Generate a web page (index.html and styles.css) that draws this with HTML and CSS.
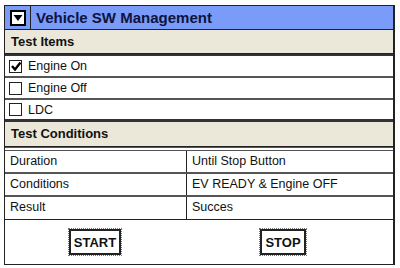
FILE: index.html
```
<!DOCTYPE html>
<html lang="en">
<head>
    <meta charset="UTF-8">
    <title>Vehicle SW Management</title>
    <link rel="stylesheet" href="styles.css">
</head>
<body>
    <div class="panel">
        <div class="title-bar">
            <div class="title-icon">
                <svg width="16" height="16" viewBox="0 0 16 16">
                    <rect x="1" y="1" width="14" height="14" fill="#fff" stroke="#000" stroke-width="2"/>
                    <polygon points="3.5,5 12.5,5 8,11" fill="#000"/>
                </svg>
            </div>
            <h1>Vehicle SW Management</h1>
        </div>

        <div class="section-head">Test Items</div>
        <div class="items">
            <div class="item">
                <span class="check">
                    <svg width="10" height="10" viewBox="0 0 10 10">
                        <path d="M1 5 L4 8.5 L9.5 1.5" fill="none" stroke="#000" stroke-width="2.4"/>
                    </svg>
                </span>Engine On
            </div>
            <div class="item"><span class="check"></span>Engine Off</div>
            <div class="item"><span class="check"></span>LDC</div>
        </div>

        <div class="section-head tall">Test Conditions</div>
        <div class="conditions">
            <div class="cond-row"><div class="cond-key">Duration</div><div class="cond-val">Until Stop Button</div></div>
            <div class="cond-row"><div class="cond-key">Conditions</div><div class="cond-val">EV READY &amp; Engine OFF</div></div>
            <div class="cond-row"><div class="cond-key">Result</div><div class="cond-val">Succes</div></div>
        </div>

        <div class="actions">
            <div class="action left"><button class="btn">START</button></div>
            <div class="action right"><button class="btn">STOP</button></div>
        </div>
    </div>
</body>
</html>
```

FILE: styles.css
```
* {
    margin: 0;
    padding: 0;
    box-sizing: border-box;
}

body {
    font-family: "Liberation Sans", Arial, sans-serif;
    background: #fff;
    color: #111;
    padding: 5px 0 0 4px;
}

.panel {
    width: 391px;
    border: 1px solid #222;
    border-right-width: 2px;
}

.title-bar {
    display: flex;
    height: 24px;
    background: #7b9bf8;
    border-bottom: 1px solid #222;
}

.title-icon {
    width: 26px;
    display: flex;
    align-items: center;
    justify-content: center;
    border-right: 1px solid #222;
}

.title-bar h1 {
    font-size: 15px;
    font-weight: bold;
    color: #0c1440;
    line-height: 23px;
    padding-left: 5px;
}

.section-head {
    height: 24px;
    background: #ebe8d9;
    font-size: 13px;
    font-weight: bold;
    line-height: 23px;
    padding-left: 6px;
    border-bottom: 1px solid #222;
}

.section-head.tall {
    height: 25px;
    line-height: 24px;
}

.items {
    border-top: 2px solid #333;
}

.item {
    height: 22px;
    display: flex;
    align-items: center;
    font-size: 12.5px;
    padding-left: 4px;
    border-bottom: 2px solid #555;
}

.item:last-child {
    border-bottom: 3px solid #333;
}

.check {
    width: 13px;
    height: 13px;
    border: 1px solid #222;
    margin-right: 6px;
    display: flex;
    align-items: center;
    justify-content: center;
}

.conditions {
    border-top: 4px double #555;
}

.cond-row {
    display: flex;
    height: 23px;
    font-size: 12.5px;
    border-bottom: 2px solid #555;
}

.cond-row:last-child {
    border-bottom: 1px solid #222;
}

.cond-key {
    width: 182px;
    padding-left: 5px;
    line-height: 21px;
    border-right: 1px solid #222;
}

.cond-val {
    flex: 1;
    padding-left: 5px;
    line-height: 21px;
}

.actions {
    display: flex;
    height: 44px;
    align-items: center;
}

.action {
    flex: 1;
    display: flex;
    justify-content: center;
}

.action.left {
    flex: 0 0 180px;
}

.action.right {
    padding-right: 12px;
}

.btn {
    font-family: inherit;
    font-size: 13px;
    font-weight: bold;
    background: #fff;
    color: #111;
    border: 2px solid #222;
    outline: 1px dotted #777;
    height: 26px;
    padding: 0 3px;
}
```
